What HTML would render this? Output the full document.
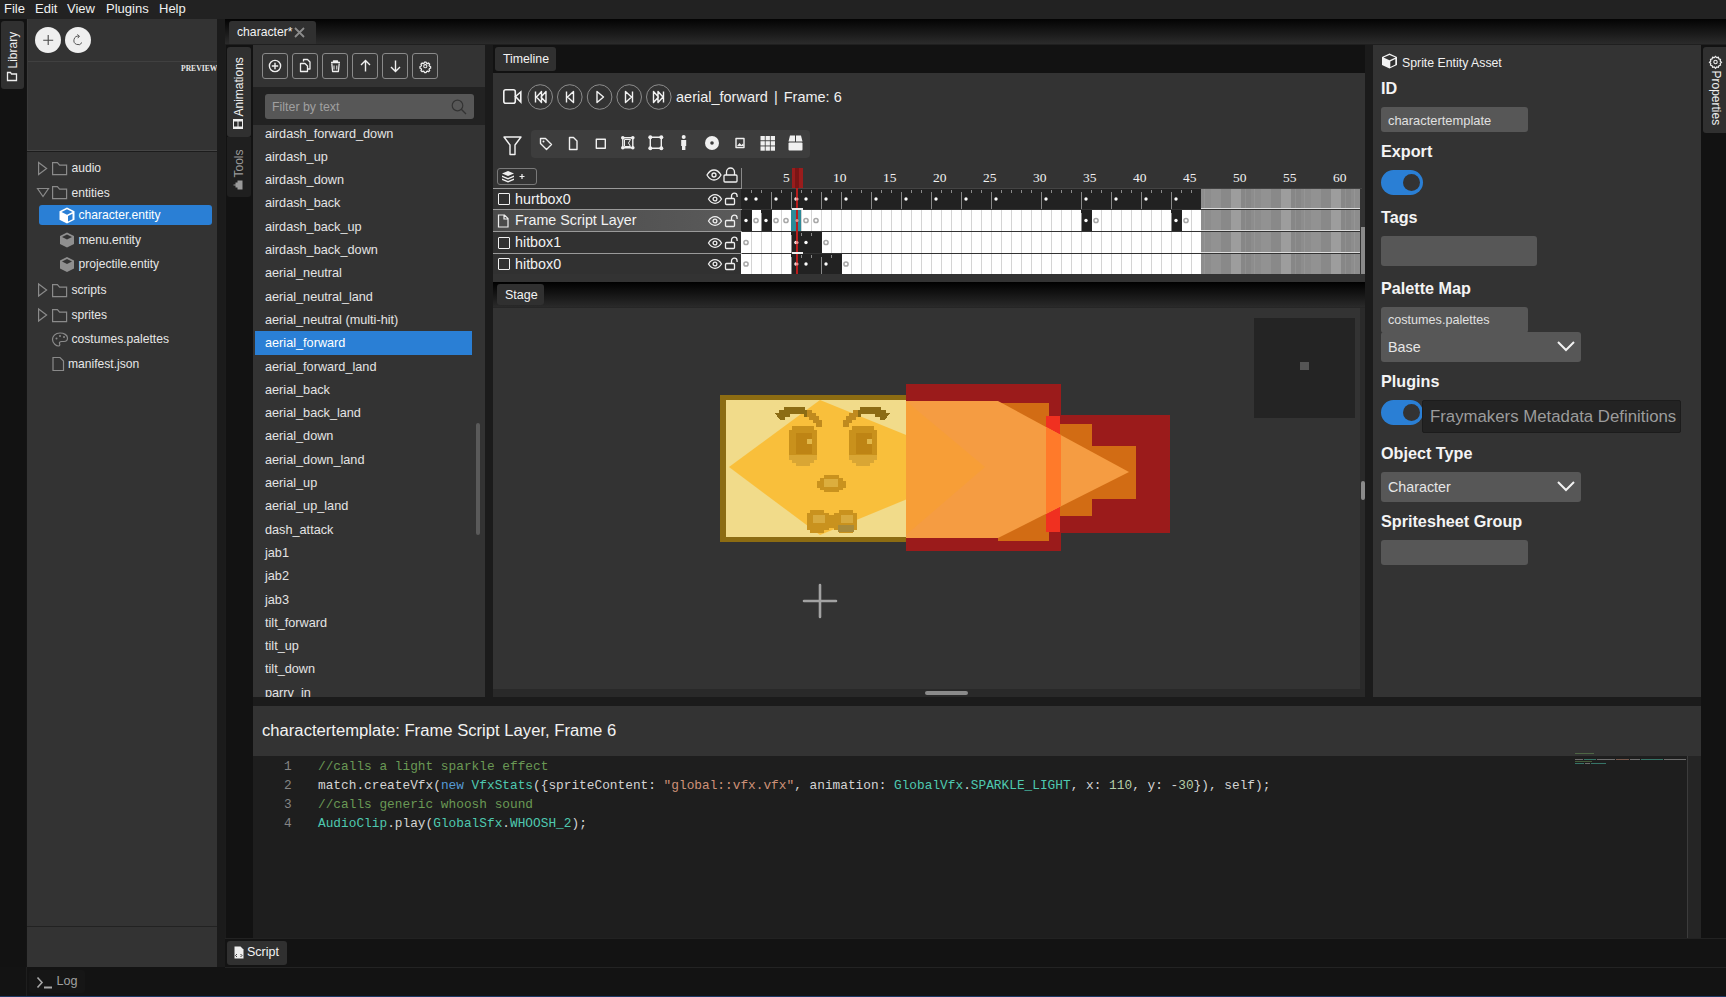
<!DOCTYPE html>
<html><head><meta charset="utf-8">
<style>
*{box-sizing:border-box;margin:0;padding:0}
html,body{width:1726px;height:997px;overflow:hidden;background:#141414;font-family:"Liberation Sans",sans-serif;color:#e8e8e8;position:relative}
.a{position:absolute}
.menu{left:0;top:0;width:1726px;height:19px;background:#222;font-size:13px;color:#f0f0f0}
.menu span{position:absolute;top:1px;line-height:15px}
.t{position:absolute;white-space:nowrap}
svg{overflow:visible}
</style></head><body>
<!-- menu -->
<div class="a menu"><span style="left:4px">File</span><span style="left:35px">Edit</span><span style="left:67px">View</span><span style="left:106px">Plugins</span><span style="left:159px">Help</span></div>

<!-- left strip -->
<div class="a" style="left:0;top:19px;width:26px;height:948px;background:#121212"></div>
<div class="a" style="left:1px;top:21px;width:23px;height:68px;background:#303030;border-radius:3px"></div>
<div class="a" style="left:2px;top:22px;width:22px;height:62px;">
 <div class="t" style="left:-20px;top:22px;width:62px;transform:rotate(-90deg);font-size:12px;color:#eee;line-height:15px">
  <svg width="12" height="11" viewBox="0 0 12 11" style="vertical-align:-1px;margin-right:2px"><path d="M1.5 1.5h3l1 1.5h5v6.5h-9z" fill="none" stroke="#eee" stroke-width="1.3" transform="rotate(90 6 5.5)"/></svg>Library</div>
</div>

<!-- library panel -->
<div class="a" style="left:27px;top:19px;width:190px;height:948px;background:#333"></div>
<div class="a" style="left:27px;top:19px;width:190px;height:42px;background:#333"></div>
<div class="a" style="left:35px;top:27px;width:26px;height:26px;border-radius:50%;background:#efefef"></div>
<div class="a" style="left:65px;top:27px;width:26px;height:26px;border-radius:50%;background:#efefef"></div>
<svg class="a" style="left:35px;top:27px" width="26" height="26"><path d="M13.2 8v10M8.2 13.2h10" stroke="#4a4a4a" stroke-width="1.1"/></svg>
<svg class="a" style="left:65px;top:27px" width="26" height="26"><path d="M17 15.5a4.3 4.3 0 1 1 -3 -6.3" fill="none" stroke="#555" stroke-width="1"/><path d="M12.3 7.5l2.2 1.7l-1.8 2" fill="none" stroke="#555" stroke-width="1"/></svg>
<div class="a" style="left:27px;top:61px;width:190px;height:1px;background:#404040"></div>
<div class="t" style="left:181px;top:63.5px;font-family:'Liberation Serif',serif;font-weight:bold;font-size:7.6px;color:#e8e8e8;letter-spacing:0px;line-height:9px">PREVIEW</div>
<div class="a" style="left:27px;top:150px;width:190px;height:1px;background:#454545"></div><div class="a" style="left:27px;top:151px;width:190px;height:1px;background:#1c1c1c"></div><div class="a" style="left:27px;top:19px;width:1px;height:131px;background:#3a3a3a"></div>
<!-- tree -->
<div class="a" style="left:28px;top:152px;width:188px;height:774px;background:#333;border-radius:3px"></div>
<div class="a" style="left:27px;top:926px;width:190px;height:1px;background:#222"></div>
<div class="a" style="left:39px;top:205px;width:173px;height:20px;background:#2a7fd5;border-radius:3px"></div>
<svg class="a" style="left:0;top:0" width="217" height="380">
 <g fill="none" stroke="#8a8a8a" stroke-width="1.2">
  <path d="M38.6 162.5v12l8 -6z"/>
  <path d="M52.6 162.6v12h14v-9.5h-7l-2.2-2.5z"/>
  <path d="M37.5 188.5h11l-5.5 8z"/>
  <path d="M52.6 186.6v12h14v-9.5h-7l-2.2-2.5z"/>
  <path d="M38.6 284v12l8 -6z"/>
  <path d="M52.6 284.6v12h14v-9.5h-7l-2.2-2.5z"/>
  <path d="M38.6 309v12l8 -6z"/>
  <path d="M52.6 309.6v12h14v-9.5h-7l-2.2-2.5z"/>
  <path d="M60 333c-5 0 -7.5 3.5 -7.5 6.5c0 4 4 6.5 6 6.5c1.5 0 1.5 -1.5 1 -2.5c-0.5 -1 0.5 -2 2 -2h2.5c2 0 3.5 -1.5 3.5 -3.5c0 -3 -3.5 -5 -7.5 -5z"/>
  <path d="M53 357.5h7l3.5 3.5v9.5h-10.5z"/>
 </g>
 <g fill="#8a8a8a"><circle cx="56.5" cy="338.5" r="1"/><circle cx="60" cy="336" r="1"/><circle cx="64" cy="337" r="1"/></g>
 <g fill="#8f8f8f">
  <path d="M67 232.5l7 3.5v8l-7 3.5l-7-3.5v-8z"/>
  <path d="M67 257l7 3.5v8l-7 3.5l-7-3.5v-8z"/>
 </g>
 <g fill="#333"><path d="M62 237l5 2.5l5-2.5l-5-2.5z"/><path d="M62 261.5l5 2.5l5-2.5l-5-2.5z"/></g>
 <g fill="#fff"><path d="M67 207.5l7.5 3.8v8.5l-7.5 3.8l-7.5-3.8v-8.5z"/></g>
 <g fill="#2a7fd5"><path d="M61.5 212l5.5 2.8l5.5-2.8l-5.5-2.8z"/><path d="M68 216v5.5l4.5 -2.3v-5.5z"/></g>
</svg>
<div class="t" style="left:71.5px;top:160.5px;font-size:12.1px;color:#e6e6e6;line-height:15px">audio</div>
<div class="t" style="left:71.5px;top:185.5px;font-size:12.1px;color:#e6e6e6;line-height:15px">entities</div>
<div class="t" style="left:78.5px;top:207.5px;font-size:12.1px;color:#fff;line-height:15px">character.entity</div>
<div class="t" style="left:78.5px;top:232.5px;font-size:12.1px;color:#e6e6e6;line-height:15px">menu.entity</div>
<div class="t" style="left:78.5px;top:257.0px;font-size:12.1px;color:#e6e6e6;line-height:15px">projectile.entity</div>
<div class="t" style="left:71.5px;top:282.5px;font-size:12.1px;color:#e6e6e6;line-height:15px">scripts</div>
<div class="t" style="left:71.5px;top:307.5px;font-size:12.1px;color:#e6e6e6;line-height:15px">sprites</div>
<div class="t" style="left:71.5px;top:331.5px;font-size:12.1px;color:#e6e6e6;line-height:15px">costumes.palettes</div>
<div class="t" style="left:68px;top:356.5px;font-size:12.1px;color:#e6e6e6;line-height:15px">manifest.json</div>

<!-- divider -->
<div class="a" style="left:217px;top:19px;width:8px;height:948px;background:#1b1b1b"></div>

<!-- log bar -->
<div class="a" style="left:0;top:967px;width:1726px;height:30px;background:#131313"></div>
<div class="a" style="left:29px;top:969.5px;width:56px;height:23px;background:#161616;border-radius:3px"></div><div class="a" style="left:26px;top:967px;width:1px;height:30px;background:#1e1e1e"></div>
<svg class="a" style="left:36px;top:976px" width="18" height="14"><path d="M1.5 1.5l4.5 5l-4.5 5" fill="none" stroke="#a8a8a8" stroke-width="1.6"/><rect x="8" y="10.5" width="8" height="2" fill="#a8a8a8"/></svg><div class="t" style="left:56.5px;top:974px;font-size:12.6px;color:#a0a0a0;line-height:15px">Log</div>
<div class="a" style="left:0;top:995.5px;width:1726px;height:1.5px;background:#1f3a66"></div>
<!-- doc tab strip -->
<div class="a" style="left:225px;top:19px;width:1501px;height:25px;background:linear-gradient(#030303,#2b2b2b)"></div>
<div class="a" style="left:229px;top:21px;width:87px;height:23px;background:#303030;border-radius:3px 3px 0 0"></div>
<div class="t" style="left:237px;top:25px;font-size:12.2px;color:#f2f2f2;line-height:15px">character*</div>
<svg class="a" style="left:294px;top:27px" width="11" height="11"><path d="M1 1L10 10M10 1L1 10" stroke="#8c8c8c" stroke-width="1.8"/></svg>
<div class="a" style="left:225px;top:44px;width:1501px;height:1px;background:#1f1f1f"></div>
<!-- vertical tabs strip -->
<div class="a" style="left:225px;top:45px;width:30px;height:922px;background:#1c1c1c"></div><div class="a" style="left:226px;top:45px;width:27px;height:894px;background:#121212"></div>
<div class="a" style="left:227px;top:47px;width:24px;height:90px;background:#303030;border-radius:3px"></div>
<div class="a" style="left:227px;top:137px;width:24px;height:60px;background:#1f1f1f;border-radius:0 0 3px 3px"></div>
<div class="t" style="left:201px;top:84px;width:76px;transform:rotate(-90deg);font-size:12px;color:#f0f0f0;line-height:15px;text-align:left">
<svg width="11" height="11" viewBox="0 0 11 11" style="vertical-align:-1px;margin-right:2px"><rect x="0.5" y="0.5" width="10" height="10" fill="#eee"/><rect x="3" y="1.5" width="5" height="3.5" fill="#2d2d2d"/><rect x="3" y="6" width="5" height="3.5" fill="#2d2d2d"/></svg>Animations</div>
<div class="t" style="left:215px;top:159px;width:48px;transform:rotate(-90deg);font-size:12px;color:#9a9a9a;line-height:15px;text-align:left">
<svg width="11" height="11" viewBox="0 0 11 11" style="vertical-align:-1px;margin-right:2px"><path d="M1 10V5h2V3h2V1h1v2h2v2h2v5z" fill="#999"/></svg>Tools</div>
<!-- animations panel -->
<div class="a" style="left:253px;top:45px;width:232px;height:652px;background:#333"></div>
<div class="a" style="left:253px;top:87px;width:232px;height:38px;background:#222"></div>
<div class="a" style="left:265px;top:94px;width:209px;height:25px;background:#575757;border-radius:3px"></div>
<div class="t" style="left:272px;top:100px;font-size:12.4px;color:#a0a0a0;line-height:15px">Filter by text</div>
<svg class="a" style="left:450px;top:98px" width="18" height="18"><circle cx="7.5" cy="7.5" r="5.3" fill="none" stroke="#333" stroke-width="1.2"/><path d="M11.3 11.3L16 16" stroke="#333" stroke-width="1.3"/></svg>
<div class="a" style="left:255px;top:125px;width:229px;height:572px;background:#333"></div>
<div class="a" style="left:255px;top:331px;width:217px;height:24px;background:#2a7fd5"></div>
<div class="a" style="left:476px;top:423px;width:4px;height:112px;background:#5a5a5a;border-radius:2px"></div>

<div class="a" style="left:262px;top:53px;width:26px;height:26px;border:1px solid #8a8a8a;border-radius:3px"></div>
<div class="a" style="left:292px;top:53px;width:26px;height:26px;border:1px solid #8a8a8a;border-radius:3px"></div>
<div class="a" style="left:322px;top:53px;width:26px;height:26px;border:1px solid #8a8a8a;border-radius:3px"></div>
<div class="a" style="left:352px;top:53px;width:26px;height:26px;border:1px solid #8a8a8a;border-radius:3px"></div>
<div class="a" style="left:382px;top:53px;width:26px;height:26px;border:1px solid #8a8a8a;border-radius:3px"></div>
<div class="a" style="left:412px;top:53px;width:26px;height:26px;border:1px solid #8a8a8a;border-radius:3px"></div>
<svg class="a" style="left:0;top:0" width="490" height="90">
 <g fill="none" stroke="#f0f0f0" stroke-width="1.4">
  <circle cx="275" cy="66" r="5.6"/><path d="M275 62.8v6.4M271.8 66h6.4"/>
  
  <path d="M365.5 60.5v11M361 65l4.5-4.5l4.5 4.5"/>
  <path d="M395.5 60.5v11M391 67l4.5 4.5l4.5-4.5"/>
 </g>
 <g fill="none" stroke="#f0f0f0" stroke-width="1.3" stroke-linejoin="round">
  <path d="M303.5 61.5v-2h4l2.5 2.5v7h-2"/>
  <path d="M300.5 63.5h4.5l2.5 2.5v5.5h-7z" fill="#333"/>
  <path d="M331 62.5h9M333.5 62.5v-1.5h4v1.5"/>
  <path d="M331.8 63.5l0.8 8h5.8l0.8-8"/>
  <path d="M334 65.5v4M336.8 65.5v4" stroke-width="1"/>
 </g>
 <g transform="translate(425.3 66.2) scale(0.72)"><path d="M-1.2 -5.8h2.4l0.4 1.6l1.3 0.6l1.5-0.9l1.7 1.7l-0.9 1.5l0.6 1.3l1.6 0.4v2.4l-1.6 0.4l-0.6 1.3l0.9 1.5l-1.7 1.7l-1.5-0.9l-1.3 0.6l-0.4 1.6h-2.4l-0.4-1.6l-1.3-0.6l-1.5 0.9l-1.7-1.7l0.9-1.5l-0.6-1.3l-1.6-0.4v-2.4l1.6-0.4l0.6-1.3l-0.9-1.5l1.7-1.7l1.5 0.9l1.3-0.6z" fill="none" stroke="#eee" stroke-width="1.7" stroke-linejoin="round"/><circle r="2.2" fill="none" stroke="#eee" stroke-width="1.5"/></g>
</svg>
<div class="t" style="left:265px;top:126.5px;font-size:12.7px;color:#e4e4e4;line-height:15px">airdash_forward_down</div>
<div class="t" style="left:265px;top:149.8px;font-size:12.7px;color:#e4e4e4;line-height:15px">airdash_up</div>
<div class="t" style="left:265px;top:173.1px;font-size:12.7px;color:#e4e4e4;line-height:15px">airdash_down</div>
<div class="t" style="left:265px;top:196.4px;font-size:12.7px;color:#e4e4e4;line-height:15px">airdash_back</div>
<div class="t" style="left:265px;top:219.7px;font-size:12.7px;color:#e4e4e4;line-height:15px">airdash_back_up</div>
<div class="t" style="left:265px;top:243.0px;font-size:12.7px;color:#e4e4e4;line-height:15px">airdash_back_down</div>
<div class="t" style="left:265px;top:266.3px;font-size:12.7px;color:#e4e4e4;line-height:15px">aerial_neutral</div>
<div class="t" style="left:265px;top:289.6px;font-size:12.7px;color:#e4e4e4;line-height:15px">aerial_neutral_land</div>
<div class="t" style="left:265px;top:312.9px;font-size:12.7px;color:#e4e4e4;line-height:15px">aerial_neutral (multi-hit)</div>
<div class="t" style="left:265px;top:336.2px;font-size:12.7px;color:#fff;line-height:15px">aerial_forward</div>
<div class="t" style="left:265px;top:359.5px;font-size:12.7px;color:#e4e4e4;line-height:15px">aerial_forward_land</div>
<div class="t" style="left:265px;top:382.8px;font-size:12.7px;color:#e4e4e4;line-height:15px">aerial_back</div>
<div class="t" style="left:265px;top:406.1px;font-size:12.7px;color:#e4e4e4;line-height:15px">aerial_back_land</div>
<div class="t" style="left:265px;top:429.4px;font-size:12.7px;color:#e4e4e4;line-height:15px">aerial_down</div>
<div class="t" style="left:265px;top:452.7px;font-size:12.7px;color:#e4e4e4;line-height:15px">aerial_down_land</div>
<div class="t" style="left:265px;top:476.0px;font-size:12.7px;color:#e4e4e4;line-height:15px">aerial_up</div>
<div class="t" style="left:265px;top:499.3px;font-size:12.7px;color:#e4e4e4;line-height:15px">aerial_up_land</div>
<div class="t" style="left:265px;top:522.6px;font-size:12.7px;color:#e4e4e4;line-height:15px">dash_attack</div>
<div class="t" style="left:265px;top:545.9px;font-size:12.7px;color:#e4e4e4;line-height:15px">jab1</div>
<div class="t" style="left:265px;top:569.2px;font-size:12.7px;color:#e4e4e4;line-height:15px">jab2</div>
<div class="t" style="left:265px;top:592.5px;font-size:12.7px;color:#e4e4e4;line-height:15px">jab3</div>
<div class="t" style="left:265px;top:615.8px;font-size:12.7px;color:#e4e4e4;line-height:15px">tilt_forward</div>
<div class="t" style="left:265px;top:639.1px;font-size:12.7px;color:#e4e4e4;line-height:15px">tilt_up</div>
<div class="t" style="left:265px;top:662.4px;font-size:12.7px;color:#e4e4e4;line-height:15px">tilt_down</div>
<div class="t" style="left:265px;top:685.7px;font-size:12.7px;color:#e4e4e4;line-height:15px">parry_in</div>
<div class="a" style="left:253px;top:697px;width:240px;height:9px;background:#1b1b1b"></div><!-- properties -->
<div class="a" style="left:1373px;top:45px;width:328px;height:652px;background:#333"></div>
<div class="a" style="left:1701px;top:45px;width:25px;height:894px;background:#121212"></div>
<div class="a" style="left:1703px;top:47px;width:23px;height:86px;background:#303030;border-radius:3px 0 0 3px"></div>
<div class="t" style="left:1675px;top:88px;width:80px;transform:rotate(90deg);font-size:12px;color:#f0f0f0;line-height:15px">
<svg width="12" height="12" viewBox="0 0 12 12" style="vertical-align:-2px;margin-right:3px;transform:rotate(-90deg)"><path d="M6 0.8l1.2 1.3l1.7-0.3l0.5 1.6l1.6 0.5l-0.3 1.7l1.3 1.2l-1.3 1.2l0.3 1.7l-1.6 0.5l-0.5 1.6l-1.7-0.3l-1.2 1.3l-1.2-1.3l-1.7 0.3l-0.5-1.6l-1.6-0.5l0.3-1.7l-1.3-1.2l1.3-1.2l-0.3-1.7l1.6-0.5l0.5-1.6l1.7 0.3z" fill="none" stroke="#eee" stroke-width="1.2"/><circle cx="6" cy="6.5" r="1.7" fill="none" stroke="#eee" stroke-width="1.1"/></svg>Properties</div>
<svg class="a" style="left:1381px;top:53px" width="17" height="16"><path d="M8.5 0.5l7.5 3.5v8l-7.5 3.5l-7.5-3.5v-8z" fill="#f2f2f2"/><path d="M2.5 4.5l6 2.8l6-2.8l-6-2.6z" fill="#333"/><path d="M9.3 8.5v5.5l5-2.5v-5.5z" fill="#2e2e2e"/></svg>
<div class="t" style="left:1402px;top:56px;font-size:12.3px;color:#f0f0f0;line-height:15px">Sprite Entity Asset</div>

<div class="t" style="left:1381px;top:79px;font-size:16.2px;font-weight:bold;color:#f4f4f4;line-height:19px">ID</div>
<div class="a" style="left:1381px;top:107px;width:147px;height:25px;background:#575757;border-radius:3px"></div>
<div class="t" style="left:1388px;top:113px;font-size:12.9px;color:#e0e0e0;line-height:15px">charactertemplate</div>
<div class="t" style="left:1381px;top:142px;font-size:16.2px;font-weight:bold;color:#f4f4f4;line-height:19px">Export</div>
<div class="a" style="left:1381px;top:170px;width:42px;height:25px;background:#2a7fd5;border-radius:13px"></div>
<div class="a" style="left:1403px;top:174px;width:17px;height:17px;background:#333;border-radius:50%"></div>
<div class="t" style="left:1381px;top:208px;font-size:16.2px;font-weight:bold;color:#f4f4f4;line-height:19px">Tags</div>
<div class="a" style="left:1381px;top:236px;width:156px;height:30px;background:#575757;border-radius:3px"></div>
<div class="t" style="left:1381px;top:279px;font-size:16.2px;font-weight:bold;color:#f4f4f4;line-height:19px">Palette Map</div>
<div class="a" style="left:1381px;top:307px;width:147px;height:26px;background:#575757;border-radius:3px"></div>
<div class="t" style="left:1388px;top:312.5px;font-size:12.6px;color:#e0e0e0;line-height:15px">costumes.palettes</div>
<div class="a" style="left:1381px;top:332px;width:200px;height:30px;background:#575757;border-radius:3px"></div>
<div class="t" style="left:1388px;top:339.5px;font-size:14.3px;color:#e6e6e6;line-height:15px">Base</div>
<svg class="a" style="left:1556px;top:340px" width="20" height="12"><path d="M2 2l8 8l8-8" fill="none" stroke="#f2f2f2" stroke-width="2"/></svg>
<div class="t" style="left:1381px;top:372px;font-size:16.2px;font-weight:bold;color:#f4f4f4;line-height:19px">Plugins</div>
<div class="a" style="left:1381px;top:400px;width:42px;height:25px;background:#2a7fd5;border-radius:13px"></div>
<div class="a" style="left:1403px;top:404px;width:17px;height:17px;background:#333;border-radius:50%"></div>
<div class="a" style="left:1422px;top:400px;width:259px;height:33px;background:#232323;border:1px solid #1c1c1c;border-radius:2px"></div>
<div class="t" style="left:1430px;top:407px;font-size:16.8px;color:#9c9c9c;line-height:19px">Fraymakers Metadata Definitions</div>
<div class="t" style="left:1381px;top:444px;font-size:16.2px;font-weight:bold;color:#f4f4f4;line-height:19px">Object Type</div>
<div class="a" style="left:1381px;top:472px;width:200px;height:30px;background:#575757;border-radius:3px"></div>
<div class="t" style="left:1388px;top:479.5px;font-size:14.3px;color:#e6e6e6;line-height:15px">Character</div>
<svg class="a" style="left:1556px;top:480px" width="20" height="12"><path d="M2 2l8 8l8-8" fill="none" stroke="#f2f2f2" stroke-width="2"/></svg>
<div class="t" style="left:1381px;top:512px;font-size:16.2px;font-weight:bold;color:#f4f4f4;line-height:19px">Spritesheet Group</div>
<div class="a" style="left:1381px;top:540px;width:147px;height:25px;background:#575757;border-radius:3px"></div>
<div class="a" style="left:1373px;top:697px;width:328px;height:9px;background:#1b1b1b"></div><!-- script -->
<div class="a" style="left:493px;top:697px;width:880px;height:9px;background:#1b1b1b"></div>
<div class="a" style="left:253px;top:706px;width:1448px;height:50px;background:#333"></div>
<div class="t" style="left:262px;top:721px;font-size:16.65px;color:#f2f2f2;line-height:19px">charactertemplate: Frame Script Layer, Frame 6</div>
<div class="a" style="left:253px;top:756px;width:1448px;height:183px;background:#1e1e1e"></div>
<div class="a" style="left:1687px;top:756px;width:1px;height:182px;background:#3c3c3c"></div>
<div class="a" style="left:1688px;top:756px;width:13px;height:183px;background:#252525"></div>
<div class="a" style="left:225px;top:939px;width:1501px;height:28px;background:#131313"></div><div class="a" style="left:225px;top:938px;width:1501px;height:1px;background:#222"></div><div class="a" style="left:225px;top:967px;width:1501px;height:1px;background:#232323"></div>
<div class="a" style="left:227px;top:941px;width:60px;height:24px;background:#303030;border-radius:3px"></div>
<svg class="a" style="left:234px;top:946px" width="10" height="13"><path d="M0.5 0.5h6l3 3v9h-9z" fill="#eee"/><path d="M3 8l-1.5 1.5l1.5 1.5M6.5 8l1.5 1.5l-1.5 1.5" fill="none" stroke="#2b2b2b" stroke-width="0.9"/></svg>
<div class="t" style="left:247px;top:945px;font-size:12.5px;color:#f4f4f4;line-height:15px">Script</div>

<div class="t" style="left:284px;top:757px;font-family:'Liberation Mono',monospace;font-size:12.8px;line-height:19px;color:#858585">1</div>
<div class="t" style="left:318px;top:757px;font-family:'Liberation Mono',monospace;font-size:12.8px;line-height:19px;color:#d4d4d4"><span style="color:#6a9955">//calls a light sparkle effect</span></div>
<div class="t" style="left:284px;top:776px;font-family:'Liberation Mono',monospace;font-size:12.8px;line-height:19px;color:#858585">2</div>
<div class="t" style="left:318px;top:776px;font-family:'Liberation Mono',monospace;font-size:12.8px;line-height:19px;color:#d4d4d4">match.createVfx(<span style="color:#569cd6">new</span> <span style="color:#4ec9b0">VfxStats</span>({spriteContent: <span style="color:#ce9178">"global::vfx.vfx"</span>, animation: <span style="color:#4ec9b0">GlobalVfx</span>.<span style="color:#4fc1ff;color:#4ec9b0">SPARKLE_LIGHT</span>, x: <span style="color:#b5cea8">110</span>, y: -<span style="color:#b5cea8">30</span>}), self);</div>
<div class="t" style="left:284px;top:795px;font-family:'Liberation Mono',monospace;font-size:12.8px;line-height:19px;color:#858585">3</div>
<div class="t" style="left:318px;top:795px;font-family:'Liberation Mono',monospace;font-size:12.8px;line-height:19px;color:#d4d4d4"><span style="color:#6a9955">//calls generic whoosh sound</span></div>
<div class="t" style="left:284px;top:814px;font-family:'Liberation Mono',monospace;font-size:12.8px;line-height:19px;color:#858585">4</div>
<div class="t" style="left:318px;top:814px;font-family:'Liberation Mono',monospace;font-size:12.8px;line-height:19px;color:#d4d4d4"><span style="color:#4ec9b0">AudioClip</span>.play(<span style="color:#4ec9b0">GlobalSfx</span>.<span style="color:#4ec9b0">WHOOSH_2</span>);</div>
<svg class="a" style="left:1575px;top:752px;opacity:0.5" width="115" height="14"><rect x="0" y="1" width="19" height="1" fill="#6a9955"/><rect x="0" y="7" width="8" height="1" fill="#bbb"/><rect x="9" y="7" width="12" height="1" fill="#4ec9b0"/><rect x="22" y="7" width="18" height="1" fill="#bbb"/><rect x="41" y="7" width="13" height="1" fill="#ce9178"/><rect x="55" y="7" width="10" height="1" fill="#bbb"/><rect x="66" y="7" width="22" height="1" fill="#4ec9b0"/><rect x="89" y="7" width="22" height="1" fill="#bbb"/><rect x="0" y="9" width="17" height="1" fill="#6a9955"/><rect x="0" y="11" width="9" height="1" fill="#4ec9b0"/><rect x="10" y="11" width="5" height="1" fill="#bbb"/><rect x="16" y="11" width="15" height="1" fill="#4ec9b0"/></svg><!-- stage -->
<div class="a" style="left:493px;top:274px;width:872px;height:8px;background:#1f1f1f"></div>
<div class="a" style="left:493px;top:282px;width:872px;height:25px;background:linear-gradient(#000,#2a2a2a)"></div>
<div class="a" style="left:497px;top:284px;width:47px;height:21px;background:#303030;border-radius:3px"></div>
<div class="t" style="left:505px;top:287.5px;font-size:12.5px;color:#f4f4f4;line-height:15px">Stage</div>
<div class="a" style="left:493px;top:307px;width:872px;height:1px;background:#262626"></div>
<div class="a" style="left:493px;top:308px;width:867px;height:381px;background:#333"></div>
<div class="a" style="left:1360px;top:308px;width:5px;height:381px;background:#2a2a2a"></div>
<div class="a" style="left:1360.5px;top:481px;width:4px;height:19px;background:#8a8a8a;border-radius:2px"></div>
<div class="a" style="left:493px;top:689px;width:872px;height:8px;background:#292929"></div>
<div class="a" style="left:925px;top:690.5px;width:43px;height:4px;background:#8a8a8a;border-radius:2px"></div>
<div class="a" style="left:1254px;top:318px;width:101px;height:100px;background:#242424"></div>
<div class="a" style="left:1300px;top:362px;width:9px;height:8px;background:#555"></div>
<svg class="a" style="left:0;top:0" width="1373" height="700">
 <path d="M820 585v32M804 601h32" stroke="#a2a2a2" stroke-width="2.6" stroke-linecap="round"/>
 <rect x="720" y="395" width="280" height="147" fill="#8c6c12"/>
 <rect x="726" y="400" width="272" height="137" fill="#f1db8a"/>
 <polygon points="729,467 820,400 985,467 820,535" fill="#ffaa00" fill-opacity="0.57"/>
 <g shape-rendering="crispEdges">
  <path d="M775 413h4v-3h5v-3h21v3h7v3h4v3h3v4h3v7h-6v-4h-3v-3h-4v-3h-5v-3h-14v3h-5v3h-5z" fill="#8c6c14"/>
  <path d="M807 410h5v3h4v3h3v4h3v7h-6v-4h-3v-3h-4v-3h-2z" fill="#c08a1e"/>
  <path d="M890 413h-4v-3h-5v-3h-21v3h-7v3h-4v3h-3v4h-3v7h6v-4h3v-3h4v-3h5v-3h14v3h5v3h5z" fill="#8c6c14"/>
  <path d="M858 410h-5v3h-4v3h-3v4h-3v7h6v-4h3v-3h4v-3h2z" fill="#c08a1e"/>
  <path d="M792 426h22v4h3v30h-3v3h-4v3h-14v-3h-4v-3h-3v-30h3z" fill="#c9911c"/>
  <path d="M789 455h28v5h-3v3h-4v3h-14v-3h-4v-3h-3z" fill="#d9a634"/>
  
  <rect x="796" y="433" width="16" height="21" fill="#be8414"/>
  <rect x="807" y="439" width="5" height="5" fill="#e2b84a"/>
  <path d="M852 426h22v4h3v30h-3v3h-4v3h-14v-3h-4v-3h-3v-30h3z" fill="#c9911c"/>
  <path d="M849 455h28v5h-3v3h-4v3h-14v-3h-4v-3h-3z" fill="#d9a634"/>
  
  <rect x="856" y="433" width="16" height="21" fill="#be8414"/>
  <rect x="867" y="439" width="5" height="5" fill="#e2b84a"/>
  <path d="M824 475h15v3h4v3h3v7h-3v2h-4v2h-15v-2h-4v-2h-3v-7h3v-3h4z" fill="#c9921e"/>
  <rect x="824" y="479" width="14" height="8" fill="#dcae3e"/>
  <path d="M810 510h14v3h5v2h5v-2h5v-3h14v3h4v17h-4v3h-14v-3h-5v-2h-5v2h-5v3h-14v-3h-3v-17h3z" fill="#c9921e"/>
  <rect x="813" y="515" width="12" height="8" fill="#d8aa3e"/>
  <rect x="841" y="515" width="12" height="8" fill="#d8aa3e"/>
  <rect x="838" y="525" width="16" height="7" fill="#a88a3a"/>
 </g>
 <rect x="906" y="384" width="155" height="167" fill="#9b1b1b"/>
 <rect x="1061" y="415" width="109" height="118" fill="#9b1b1b"/>
 <polygon points="998,403 1049,403 1049,424 1092,424 1092,446 1136,446 1136,499 1092,499 1092,516 1049,516 1049,541 998,541" fill="#d26c14"/>
 <rect x="1046" y="416" width="14" height="116" fill="#f03020"/>
 <polygon points="906,401 998,401 1129,472 998,538 906,538" fill="#f59c42"/>
 <polygon points="906,401 985,467 906,535" fill="#f8a030" fill-opacity="0.6"/>
 <polygon points="1046,427 1061,435 1061,506 1046,514" fill="#ff7a2a"/>
</svg>
<!-- timeline panel -->
<div class="a" style="left:485px;top:45px;width:8px;height:660px;background:#1b1b1b"></div>
<div class="a" style="left:493px;top:45px;width:880px;height:28px;background:#121212"></div>
<div class="a" style="left:495px;top:47px;width:61px;height:24px;background:#303030;border-radius:3px"></div>
<div class="t" style="left:503px;top:52px;font-size:12.3px;color:#f4f4f4;line-height:15px">Timeline</div>
<div class="a" style="left:493px;top:73px;width:872px;height:209px;background:#333"></div>
<div class="a" style="left:1365px;top:45px;width:8px;height:660px;background:#1b1b1b"></div>
<svg class="a" style="left:0;top:0" width="1373" height="290">
 <g fill="none" stroke="#f2f2f2" stroke-width="1.6">
  <rect x="503.8" y="89.8" width="11.5" height="13.5" rx="2"/>
  <path d="M515.5 96.5l5.3-4.5v10z"/>
 </g>
 <g fill="none" stroke="#8c8c8c" stroke-width="1">
  <circle cx="540.2" cy="97" r="12.3"/><circle cx="569.8" cy="97" r="12.3"/><circle cx="599.6" cy="97" r="12.3"/><circle cx="629.2" cy="97" r="12.3"/><circle cx="658.8" cy="97" r="12.3"/>
 </g>
 <g fill="none" stroke="#f2f2f2" stroke-width="1.4" stroke-linejoin="round">
  <path d="M535.5 91.5v11M541.5 91.5l-5 5.5l5 5.5zM546 91.5l-5 5.5l5 5.5z"/>
  <path d="M566.5 91.5v11M573.5 91.5l-6 5.5l6 5.5z"/>
  <path d="M597 91.5v11l6.5-5.5z"/>
  <path d="M632.5 91.5v11M625.5 91.5l6 5.5l-6 5.5z"/>
  <path d="M663.5 91.5v11M653.5 91.5l5 5.5l-5 5.5zM658 91.5l5 5.5l-5 5.5z"/>
  <path d="M504 137h17l-6 8v9.5h-5v-9.5z"/>
 </g>
</svg>
<div class="t" style="left:676px;top:89px;font-size:14.5px;color:#f0f0f0;line-height:16px">aerial_forward <span style="padding:0 2px">|</span> Frame: 6</div>
<div class="a" style="left:531px;top:130px;width:279px;height:28px;background:#3d3d3d;border-radius:4px"></div>
<svg class="a" style="left:0;top:0" width="1373" height="290">
 <g fill="none" stroke="#f0f0f0" stroke-width="1.4" stroke-linejoin="round">
  <path d="M540.5 138.5h5l6 6l-5 5l-6-6z"/>
  <path d="M569.5 137.5h4l3.5 3.5v8.5h-7.5z"/>
  <rect x="596.3" y="139.3" width="9" height="9"/>
  <rect x="622.8" y="137.8" width="10" height="10"/>
  <rect x="650.3" y="137.3" width="11" height="11"/>
  <path d="M736 138.5h8v9h-8z"/>
 </g>
 <g fill="#f0f0f0">
  <circle cx="622.8" cy="137.8" r="1.8"/><circle cx="632.8" cy="137.8" r="1.8"/><circle cx="622.8" cy="147.8" r="1.8"/><circle cx="632.8" cy="147.8" r="1.8"/>
  <circle cx="650.3" cy="137.3" r="2"/><circle cx="661.3" cy="137.3" r="2"/><circle cx="650.3" cy="148.3" r="2"/><circle cx="661.3" cy="148.3" r="2"/>
  <circle cx="543.5" cy="141.5" r="1"/>
  <circle cx="683.7" cy="137" r="2"/><path d="M681.2 140h5v6h-0.8v4h-3.4v-4h-0.8z"/>
  <circle cx="712" cy="143" r="7"/>
  <rect x="760.5" y="136" width="4.3" height="4.3"/><rect x="765.6" y="136" width="4.3" height="4.3"/><rect x="770.7" y="136" width="4.3" height="4.3"/>
  <rect x="760.5" y="141.2" width="4.3" height="4.3"/><rect x="765.6" y="141.2" width="4.3" height="4.3"/><rect x="770.7" y="141.2" width="4.3" height="4.3"/>
  <rect x="760.5" y="146.4" width="4.3" height="4.3"/><rect x="765.6" y="146.4" width="4.3" height="4.3"/><rect x="770.7" y="146.4" width="4.3" height="4.3"/>
  <path d="M788.5 141.5l1.5-6h5v6zM796 141.5v-6h5l1.5 6z"/><rect x="788.5" y="142.5" width="14" height="8" rx="1"/>
 </g>
 <circle cx="712" cy="143" r="1.8" fill="#3d3d3d"/>
 <path d="M737 146l2.5-3l2 2l1.5-1.5l1 2.5z" fill="#f0f0f0"/>
 <path d="M624.5 139.5l6 0l-2 3.5l2 3.5h-6z" fill="none" stroke="#f0f0f0" stroke-width="1"/>
</svg>
<!-- layers header -->
<div class="a" style="left:497px;top:168px;width:40px;height:17px;border:1px solid #7a7a7a;border-radius:3px"></div>
<svg class="a" style="left:0;top:0" width="1373" height="290">
 <g fill="#f0f0f0"><path d="M508 171l6 2.5l-6 2.5l-6-2.5z"/><path d="M502 175.5l6 2.5l6-2.5v1.5l-6 2.5l-6-2.5z"/><path d="M502 178.5l6 2.5l6-2.5v1.5l-6 2.5l-6-2.5z"/></g>
 <path d="M519.5 176.5h5M522 174v5" stroke="#f0f0f0" stroke-width="1.2"/>
 <g fill="none" stroke="#f0f0f0" stroke-width="1.3">
  <path d="M707 175c2-3.5 4.5-5 7-5s5 1.5 7 5c-2 3.5-4.5 5-7 5s-5-1.5-7-5z"/><circle cx="714" cy="175" r="2"/>
  <rect x="724" y="175" width="13" height="7" rx="1"/><path d="M726.5 175v-3a4 4 0 0 1 8 0v3"/>
 </g>
</svg>
<div class="a" style="left:741px;top:168px;width:1px;height:106px;background:#8a8a8a"></div>

<div class="a" style="left:493px;top:188px;width:249px;height:1px;background:#9a9a9a"></div>
<div class="a" style="left:493px;top:189px;width:248px;height:20px;background:#313131"></div>
<div class="a" style="left:493px;top:209px;width:249px;height:1px;background:#9a9a9a"></div>
<div class="a" style="left:497.5px;top:193.0px;width:12px;height:12px;border:1.5px solid #f0f0f0;border-radius:1px"></div>
<div class="t" style="left:515px;top:190.5px;font-size:14.3px;color:#f2f2f2;line-height:17px">hurtbox0</div>
<svg class="a" style="left:705px;top:192.0px" width="36" height="14"><g fill="none" stroke="#eee" stroke-width="1.3"><path d="M3.5 7c1.8-3 4-4.3 6.5-4.3s4.7 1.3 6.5 4.3c-1.8 3-4 4.3-6.5 4.3s-4.7-1.3-6.5-4.3z"/><circle cx="10" cy="7" r="1.9"/><rect x="20.5" y="6.5" width="9" height="6" rx="1"/><path d="M26.5 6.5v-2.5a2.8 2.8 0 0 1 5.6 0v1"/></g></svg>
<div class="a" style="left:493px;top:210px;width:248px;height:21px;background:linear-gradient(90deg,#4a4a4a,#5a5a5a)"></div>
<div class="a" style="left:493px;top:231px;width:249px;height:1px;background:#9a9a9a"></div>
<svg class="a" style="left:497px;top:213.5px" width="12" height="14"><path d="M1.5 1h6l3.5 3.5v8.5h-9.5z M7 1v4h4" fill="none" stroke="#eee" stroke-width="1.2"/></svg>
<div class="t" style="left:515px;top:212.0px;font-size:14.3px;color:#f2f2f2;line-height:17px">Frame Script Layer</div>
<svg class="a" style="left:705px;top:213.5px" width="36" height="14"><g fill="none" stroke="#eee" stroke-width="1.3"><path d="M3.5 7c1.8-3 4-4.3 6.5-4.3s4.7 1.3 6.5 4.3c-1.8 3-4 4.3-6.5 4.3s-4.7-1.3-6.5-4.3z"/><circle cx="10" cy="7" r="1.9"/><rect x="20.5" y="6.5" width="9" height="6" rx="1"/><path d="M26.5 6.5v-2.5a2.8 2.8 0 0 1 5.6 0v1"/></g></svg>
<div class="a" style="left:493px;top:232px;width:248px;height:21px;background:#313131"></div>
<div class="a" style="left:493px;top:253px;width:249px;height:1px;background:#9a9a9a"></div>
<div class="a" style="left:497.5px;top:236.5px;width:12px;height:12px;border:1.5px solid #f0f0f0;border-radius:1px"></div>
<div class="t" style="left:515px;top:234.0px;font-size:14.3px;color:#f2f2f2;line-height:17px">hitbox1</div>
<svg class="a" style="left:705px;top:235.5px" width="36" height="14"><g fill="none" stroke="#eee" stroke-width="1.3"><path d="M3.5 7c1.8-3 4-4.3 6.5-4.3s4.7 1.3 6.5 4.3c-1.8 3-4 4.3-6.5 4.3s-4.7-1.3-6.5-4.3z"/><circle cx="10" cy="7" r="1.9"/><rect x="20.5" y="6.5" width="9" height="6" rx="1"/><path d="M26.5 6.5v-2.5a2.8 2.8 0 0 1 5.6 0v1"/></g></svg>
<div class="a" style="left:493px;top:254px;width:248px;height:20px;background:#313131"></div>
<div class="a" style="left:497.5px;top:258.0px;width:12px;height:12px;border:1.5px solid #f0f0f0;border-radius:1px"></div>
<div class="t" style="left:515px;top:255.5px;font-size:14.3px;color:#f2f2f2;line-height:17px">hitbox0</div>
<svg class="a" style="left:705px;top:257.0px" width="36" height="14"><g fill="none" stroke="#eee" stroke-width="1.3"><path d="M3.5 7c1.8-3 4-4.3 6.5-4.3s4.7 1.3 6.5 4.3c-1.8 3-4 4.3-6.5 4.3s-4.7-1.3-6.5-4.3z"/><circle cx="10" cy="7" r="1.9"/><rect x="20.5" y="6.5" width="9" height="6" rx="1"/><path d="M26.5 6.5v-2.5a2.8 2.8 0 0 1 5.6 0v1"/></g></svg>
<div class="t" style="left:783.0px;top:170px;font-family:'Liberation Serif',serif;font-size:13.5px;color:#f2f2f2;line-height:15px">5</div>
<div class="t" style="left:833.0px;top:170px;font-family:'Liberation Serif',serif;font-size:13.5px;color:#f2f2f2;line-height:15px">10</div>
<div class="t" style="left:883.0px;top:170px;font-family:'Liberation Serif',serif;font-size:13.5px;color:#f2f2f2;line-height:15px">15</div>
<div class="t" style="left:933.0px;top:170px;font-family:'Liberation Serif',serif;font-size:13.5px;color:#f2f2f2;line-height:15px">20</div>
<div class="t" style="left:983.0px;top:170px;font-family:'Liberation Serif',serif;font-size:13.5px;color:#f2f2f2;line-height:15px">25</div>
<div class="t" style="left:1033.0px;top:170px;font-family:'Liberation Serif',serif;font-size:13.5px;color:#f2f2f2;line-height:15px">30</div>
<div class="t" style="left:1083.0px;top:170px;font-family:'Liberation Serif',serif;font-size:13.5px;color:#f2f2f2;line-height:15px">35</div>
<div class="t" style="left:1133.0px;top:170px;font-family:'Liberation Serif',serif;font-size:13.5px;color:#f2f2f2;line-height:15px">40</div>
<div class="t" style="left:1183.0px;top:170px;font-family:'Liberation Serif',serif;font-size:13.5px;color:#f2f2f2;line-height:15px">45</div>
<div class="t" style="left:1233.0px;top:170px;font-family:'Liberation Serif',serif;font-size:13.5px;color:#f2f2f2;line-height:15px">50</div>
<div class="t" style="left:1283.0px;top:170px;font-family:'Liberation Serif',serif;font-size:13.5px;color:#f2f2f2;line-height:15px">55</div>
<div class="t" style="left:1333.0px;top:170px;font-family:'Liberation Serif',serif;font-size:13.5px;color:#f2f2f2;line-height:15px">60</div>
<div class="a" style="left:792px;top:168px;width:11px;height:20px;background:#9a1c1c"></div>
<div class="a" style="left:795px;top:168px;width:4px;height:20px;background:#7a1515"></div>
<svg class="a" style="left:0;top:0" width="1373" height="290" shape-rendering="crispEdges">
<defs><pattern id="stripes" x="1201" y="0" width="50" height="10" patternUnits="userSpaceOnUse"><rect width="50" height="10" fill="#8c8c8c"/><rect x="0" width="10" height="10" fill="#8d8d8d"/><rect x="3" width="1" height="10" fill="#959595"/><rect x="10" width="10" height="10" fill="#929292"/><rect x="20" width="10" height="10" fill="#898989"/><rect x="30" width="10" height="10" fill="#9d9d9d"/><rect x="40" width="10" height="10" fill="#878787"/><rect x="44" width="1" height="10" fill="#909090"/></pattern></defs>
<rect x="741" y="189" width="460.0" height="20" fill="#fff"/>
<rect x="740.5" y="189" width="11.0" height="20" fill="#222"/>
<rect x="750.5" y="189" width="11.0" height="20" fill="#222"/>
<rect x="760.5" y="189" width="11.0" height="20" fill="#222"/>
<rect x="770.5" y="189" width="11.0" height="20" fill="#222"/>
<rect x="780.5" y="189" width="11.0" height="20" fill="#222"/>
<rect x="790.5" y="189" width="11.0" height="20" fill="#222"/>
<rect x="800.5" y="189" width="11.0" height="20" fill="#222"/>
<rect x="810.5" y="189" width="11.0" height="20" fill="#222"/>
<rect x="820.5" y="189" width="11.0" height="20" fill="#222"/>
<rect x="830.5" y="189" width="11.0" height="20" fill="#222"/>
<rect x="840.5" y="189" width="11.0" height="20" fill="#222"/>
<rect x="850.5" y="189" width="11.0" height="20" fill="#222"/>
<rect x="860.5" y="189" width="11.0" height="20" fill="#222"/>
<rect x="870.5" y="189" width="11.0" height="20" fill="#222"/>
<rect x="880.5" y="189" width="11.0" height="20" fill="#222"/>
<rect x="890.5" y="189" width="11.0" height="20" fill="#222"/>
<rect x="900.5" y="189" width="11.0" height="20" fill="#222"/>
<rect x="910.5" y="189" width="11.0" height="20" fill="#222"/>
<rect x="920.5" y="189" width="11.0" height="20" fill="#222"/>
<rect x="930.5" y="189" width="11.0" height="20" fill="#222"/>
<rect x="940.5" y="189" width="11.0" height="20" fill="#222"/>
<rect x="950.5" y="189" width="11.0" height="20" fill="#222"/>
<rect x="960.5" y="189" width="11.0" height="20" fill="#222"/>
<rect x="970.5" y="189" width="11.0" height="20" fill="#222"/>
<rect x="980.5" y="189" width="11.0" height="20" fill="#222"/>
<rect x="990.5" y="189" width="11.0" height="20" fill="#222"/>
<rect x="1000.5" y="189" width="11.0" height="20" fill="#222"/>
<rect x="1010.5" y="189" width="11.0" height="20" fill="#222"/>
<rect x="1020.5" y="189" width="11.0" height="20" fill="#222"/>
<rect x="1030.5" y="189" width="11.0" height="20" fill="#222"/>
<rect x="1040.5" y="189" width="11.0" height="20" fill="#222"/>
<rect x="1050.5" y="189" width="11.0" height="20" fill="#222"/>
<rect x="1060.5" y="189" width="11.0" height="20" fill="#222"/>
<rect x="1070.5" y="189" width="11.0" height="20" fill="#222"/>
<rect x="1080.5" y="189" width="11.0" height="20" fill="#222"/>
<rect x="1090.5" y="189" width="11.0" height="20" fill="#222"/>
<rect x="1100.5" y="189" width="11.0" height="20" fill="#222"/>
<rect x="1110.5" y="189" width="11.0" height="20" fill="#222"/>
<rect x="1120.5" y="189" width="11.0" height="20" fill="#222"/>
<rect x="1130.5" y="189" width="11.0" height="20" fill="#222"/>
<rect x="1140.5" y="189" width="11.0" height="20" fill="#222"/>
<rect x="1150.5" y="189" width="11.0" height="20" fill="#222"/>
<rect x="1160.5" y="189" width="11.0" height="20" fill="#222"/>
<rect x="1170.5" y="189" width="11.0" height="20" fill="#222"/>
<rect x="1180.5" y="189" width="11.0" height="20" fill="#222"/>
<rect x="1190.5" y="189" width="11.0" height="20" fill="#222"/>
<rect x="771.0" y="192" width="1" height="17" fill="#8a8a8a"/>
<rect x="791.0" y="192" width="1" height="17" fill="#8a8a8a"/>
<rect x="821.0" y="192" width="1" height="17" fill="#8a8a8a"/>
<rect x="841.0" y="192" width="1" height="17" fill="#8a8a8a"/>
<rect x="871.0" y="192" width="1" height="17" fill="#8a8a8a"/>
<rect x="901.0" y="192" width="1" height="17" fill="#8a8a8a"/>
<rect x="931.0" y="192" width="1" height="17" fill="#8a8a8a"/>
<rect x="961.0" y="192" width="1" height="17" fill="#8a8a8a"/>
<rect x="991.0" y="192" width="1" height="17" fill="#8a8a8a"/>
<rect x="1041.0" y="192" width="1" height="17" fill="#8a8a8a"/>
<rect x="1081.0" y="192" width="1" height="17" fill="#8a8a8a"/>
<rect x="1111.0" y="192" width="1" height="17" fill="#8a8a8a"/>
<rect x="1141.0" y="192" width="1" height="17" fill="#8a8a8a"/>
<rect x="1171.0" y="192" width="1" height="17" fill="#8a8a8a"/>
<rect x="751.0" y="190" width="1" height="3" fill="#8a8a8a"/>
<rect x="761.0" y="190" width="1" height="3" fill="#8a8a8a"/>
<rect x="781.0" y="190" width="1" height="3" fill="#8a8a8a"/>
<rect x="801.0" y="190" width="1" height="3" fill="#8a8a8a"/>
<rect x="811.0" y="190" width="1" height="3" fill="#8a8a8a"/>
<rect x="831.0" y="190" width="1" height="3" fill="#8a8a8a"/>
<rect x="851.0" y="190" width="1" height="3" fill="#8a8a8a"/>
<rect x="861.0" y="190" width="1" height="3" fill="#8a8a8a"/>
<rect x="881.0" y="190" width="1" height="3" fill="#8a8a8a"/>
<rect x="891.0" y="190" width="1" height="3" fill="#8a8a8a"/>
<rect x="911.0" y="190" width="1" height="3" fill="#8a8a8a"/>
<rect x="921.0" y="190" width="1" height="3" fill="#8a8a8a"/>
<rect x="941.0" y="190" width="1" height="3" fill="#8a8a8a"/>
<rect x="951.0" y="190" width="1" height="3" fill="#8a8a8a"/>
<rect x="971.0" y="190" width="1" height="3" fill="#8a8a8a"/>
<rect x="981.0" y="190" width="1" height="3" fill="#8a8a8a"/>
<rect x="1001.0" y="190" width="1" height="3" fill="#8a8a8a"/>
<rect x="1011.0" y="190" width="1" height="3" fill="#8a8a8a"/>
<rect x="1021.0" y="190" width="1" height="3" fill="#8a8a8a"/>
<rect x="1031.0" y="190" width="1" height="3" fill="#8a8a8a"/>
<rect x="1051.0" y="190" width="1" height="3" fill="#8a8a8a"/>
<rect x="1061.0" y="190" width="1" height="3" fill="#8a8a8a"/>
<rect x="1071.0" y="190" width="1" height="3" fill="#8a8a8a"/>
<rect x="1091.0" y="190" width="1" height="3" fill="#8a8a8a"/>
<rect x="1101.0" y="190" width="1" height="3" fill="#8a8a8a"/>
<rect x="1121.0" y="190" width="1" height="3" fill="#8a8a8a"/>
<rect x="1131.0" y="190" width="1" height="3" fill="#8a8a8a"/>
<rect x="1151.0" y="190" width="1" height="3" fill="#8a8a8a"/>
<rect x="1161.0" y="190" width="1" height="3" fill="#8a8a8a"/>
<rect x="1181.0" y="190" width="1" height="3" fill="#8a8a8a"/>
<rect x="1191.0" y="190" width="1" height="3" fill="#8a8a8a"/>
<circle cx="746.0" cy="199.0" r="1.7" fill="#fff" shape-rendering="geometricPrecision"/>
<circle cx="756.0" cy="199.0" r="1.7" fill="#fff" shape-rendering="geometricPrecision"/>
<circle cx="776.0" cy="199.0" r="1.7" fill="#fff" shape-rendering="geometricPrecision"/>
<circle cx="796.0" cy="199.0" r="1.7" fill="#fff" shape-rendering="geometricPrecision"/>
<circle cx="806.0" cy="199.0" r="1.7" fill="#fff" shape-rendering="geometricPrecision"/>
<circle cx="826.0" cy="199.0" r="1.7" fill="#fff" shape-rendering="geometricPrecision"/>
<circle cx="846.0" cy="199.0" r="1.7" fill="#fff" shape-rendering="geometricPrecision"/>
<circle cx="876.0" cy="199.0" r="1.7" fill="#fff" shape-rendering="geometricPrecision"/>
<circle cx="906.0" cy="199.0" r="1.7" fill="#fff" shape-rendering="geometricPrecision"/>
<circle cx="936.0" cy="199.0" r="1.7" fill="#fff" shape-rendering="geometricPrecision"/>
<circle cx="966.0" cy="199.0" r="1.7" fill="#fff" shape-rendering="geometricPrecision"/>
<circle cx="996.0" cy="199.0" r="1.7" fill="#fff" shape-rendering="geometricPrecision"/>
<circle cx="1046.0" cy="199.0" r="1.7" fill="#fff" shape-rendering="geometricPrecision"/>
<circle cx="1086.0" cy="199.0" r="1.7" fill="#fff" shape-rendering="geometricPrecision"/>
<circle cx="1116.0" cy="199.0" r="1.7" fill="#fff" shape-rendering="geometricPrecision"/>
<circle cx="1146.0" cy="199.0" r="1.7" fill="#fff" shape-rendering="geometricPrecision"/>
<circle cx="1176.0" cy="199.0" r="1.7" fill="#fff" shape-rendering="geometricPrecision"/>
<rect x="1201.0" y="189" width="159.0" height="20" fill="url(#stripes)"/>
<rect x="1201.0" y="208" width="159.0" height="1" fill="#dcdcdc"/><rect x="1201.0" y="209" width="159.0" height="1" fill="#333"/>
<rect x="741" y="210" width="460.0" height="21" fill="#fff"/>
<rect x="740.5" y="210" width="11.0" height="21" fill="#222"/>
<rect x="760.5" y="210" width="11.0" height="21" fill="#222"/>
<rect x="781.0" y="210" width="1" height="21" fill="#d4d4d4"/>
<rect x="791.0" y="210" width="10.0" height="21" fill="#2d8a98"/>
<rect x="801.0" y="210" width="1" height="21" fill="#d4d4d4"/>
<rect x="811.0" y="210" width="1" height="21" fill="#d4d4d4"/>
<rect x="821.0" y="210" width="1" height="21" fill="#d4d4d4"/>
<rect x="831.0" y="210" width="1" height="21" fill="#d4d4d4"/>
<rect x="841.0" y="210" width="1" height="21" fill="#d4d4d4"/>
<rect x="851.0" y="210" width="1" height="21" fill="#d4d4d4"/>
<rect x="861.0" y="210" width="1" height="21" fill="#d4d4d4"/>
<rect x="871.0" y="210" width="1" height="21" fill="#d4d4d4"/>
<rect x="881.0" y="210" width="1" height="21" fill="#d4d4d4"/>
<rect x="891.0" y="210" width="1" height="21" fill="#d4d4d4"/>
<rect x="901.0" y="210" width="1" height="21" fill="#d4d4d4"/>
<rect x="911.0" y="210" width="1" height="21" fill="#d4d4d4"/>
<rect x="921.0" y="210" width="1" height="21" fill="#d4d4d4"/>
<rect x="931.0" y="210" width="1" height="21" fill="#d4d4d4"/>
<rect x="941.0" y="210" width="1" height="21" fill="#d4d4d4"/>
<rect x="951.0" y="210" width="1" height="21" fill="#d4d4d4"/>
<rect x="961.0" y="210" width="1" height="21" fill="#d4d4d4"/>
<rect x="971.0" y="210" width="1" height="21" fill="#d4d4d4"/>
<rect x="981.0" y="210" width="1" height="21" fill="#d4d4d4"/>
<rect x="991.0" y="210" width="1" height="21" fill="#d4d4d4"/>
<rect x="1001.0" y="210" width="1" height="21" fill="#d4d4d4"/>
<rect x="1011.0" y="210" width="1" height="21" fill="#d4d4d4"/>
<rect x="1021.0" y="210" width="1" height="21" fill="#d4d4d4"/>
<rect x="1031.0" y="210" width="1" height="21" fill="#d4d4d4"/>
<rect x="1041.0" y="210" width="1" height="21" fill="#d4d4d4"/>
<rect x="1051.0" y="210" width="1" height="21" fill="#d4d4d4"/>
<rect x="1061.0" y="210" width="1" height="21" fill="#d4d4d4"/>
<rect x="1071.0" y="210" width="1" height="21" fill="#d4d4d4"/>
<rect x="1080.5" y="210" width="11.0" height="21" fill="#222"/>
<rect x="1101.0" y="210" width="1" height="21" fill="#d4d4d4"/>
<rect x="1111.0" y="210" width="1" height="21" fill="#d4d4d4"/>
<rect x="1121.0" y="210" width="1" height="21" fill="#d4d4d4"/>
<rect x="1131.0" y="210" width="1" height="21" fill="#d4d4d4"/>
<rect x="1141.0" y="210" width="1" height="21" fill="#d4d4d4"/>
<rect x="1151.0" y="210" width="1" height="21" fill="#d4d4d4"/>
<rect x="1161.0" y="210" width="1" height="21" fill="#d4d4d4"/>
<rect x="1170.5" y="210" width="11.0" height="21" fill="#222"/>
<rect x="1191.0" y="210" width="1" height="21" fill="#d4d4d4"/>
<rect x="761.0" y="213" width="1" height="18" fill="#8a8a8a"/>
<rect x="1081.0" y="213" width="1" height="18" fill="#8a8a8a"/>
<rect x="1171.0" y="213" width="1" height="18" fill="#8a8a8a"/>
<circle cx="746.0" cy="220.5" r="1.7" fill="#fff" shape-rendering="geometricPrecision"/>
<circle cx="766.0" cy="220.5" r="1.7" fill="#fff" shape-rendering="geometricPrecision"/>
<circle cx="1086.0" cy="220.5" r="1.7" fill="#fff" shape-rendering="geometricPrecision"/>
<circle cx="1176.0" cy="220.5" r="1.7" fill="#fff" shape-rendering="geometricPrecision"/>
<circle cx="756.0" cy="220.5" r="2.1" fill="none" stroke="#a8a8a8" stroke-width="1.5" shape-rendering="geometricPrecision"/>
<circle cx="776.0" cy="220.5" r="2.1" fill="none" stroke="#a8a8a8" stroke-width="1.5" shape-rendering="geometricPrecision"/>
<circle cx="786.0" cy="220.5" r="2.1" fill="none" stroke="#a8a8a8" stroke-width="1.5" shape-rendering="geometricPrecision"/>
<circle cx="806.0" cy="220.5" r="2.1" fill="none" stroke="#a8a8a8" stroke-width="1.5" shape-rendering="geometricPrecision"/>
<circle cx="816.0" cy="220.5" r="2.1" fill="none" stroke="#a8a8a8" stroke-width="1.5" shape-rendering="geometricPrecision"/>
<circle cx="1096.0" cy="220.5" r="2.1" fill="none" stroke="#a8a8a8" stroke-width="1.5" shape-rendering="geometricPrecision"/>
<circle cx="1186.0" cy="220.5" r="2.1" fill="none" stroke="#a8a8a8" stroke-width="1.5" shape-rendering="geometricPrecision"/>
<rect x="1201.0" y="210" width="159.0" height="21" fill="url(#stripes)"/>
<rect x="1201.0" y="230" width="159.0" height="1" fill="#dcdcdc"/><rect x="1201.0" y="231" width="159.0" height="1" fill="#333"/>
<rect x="741" y="232" width="460.0" height="21" fill="#fff"/>
<rect x="751.0" y="232" width="1" height="21" fill="#d4d4d4"/>
<rect x="761.0" y="232" width="1" height="21" fill="#d4d4d4"/>
<rect x="771.0" y="232" width="1" height="21" fill="#d4d4d4"/>
<rect x="781.0" y="232" width="1" height="21" fill="#d4d4d4"/>
<rect x="790.5" y="232" width="11.0" height="21" fill="#222"/>
<rect x="800.5" y="232" width="11.0" height="21" fill="#222"/>
<rect x="810.5" y="232" width="11.0" height="21" fill="#222"/>
<rect x="831.0" y="232" width="1" height="21" fill="#d4d4d4"/>
<rect x="841.0" y="232" width="1" height="21" fill="#d4d4d4"/>
<rect x="851.0" y="232" width="1" height="21" fill="#d4d4d4"/>
<rect x="861.0" y="232" width="1" height="21" fill="#d4d4d4"/>
<rect x="871.0" y="232" width="1" height="21" fill="#d4d4d4"/>
<rect x="881.0" y="232" width="1" height="21" fill="#d4d4d4"/>
<rect x="891.0" y="232" width="1" height="21" fill="#d4d4d4"/>
<rect x="901.0" y="232" width="1" height="21" fill="#d4d4d4"/>
<rect x="911.0" y="232" width="1" height="21" fill="#d4d4d4"/>
<rect x="921.0" y="232" width="1" height="21" fill="#d4d4d4"/>
<rect x="931.0" y="232" width="1" height="21" fill="#d4d4d4"/>
<rect x="941.0" y="232" width="1" height="21" fill="#d4d4d4"/>
<rect x="951.0" y="232" width="1" height="21" fill="#d4d4d4"/>
<rect x="961.0" y="232" width="1" height="21" fill="#d4d4d4"/>
<rect x="971.0" y="232" width="1" height="21" fill="#d4d4d4"/>
<rect x="981.0" y="232" width="1" height="21" fill="#d4d4d4"/>
<rect x="991.0" y="232" width="1" height="21" fill="#d4d4d4"/>
<rect x="1001.0" y="232" width="1" height="21" fill="#d4d4d4"/>
<rect x="1011.0" y="232" width="1" height="21" fill="#d4d4d4"/>
<rect x="1021.0" y="232" width="1" height="21" fill="#d4d4d4"/>
<rect x="1031.0" y="232" width="1" height="21" fill="#d4d4d4"/>
<rect x="1041.0" y="232" width="1" height="21" fill="#d4d4d4"/>
<rect x="1051.0" y="232" width="1" height="21" fill="#d4d4d4"/>
<rect x="1061.0" y="232" width="1" height="21" fill="#d4d4d4"/>
<rect x="1071.0" y="232" width="1" height="21" fill="#d4d4d4"/>
<rect x="1081.0" y="232" width="1" height="21" fill="#d4d4d4"/>
<rect x="1091.0" y="232" width="1" height="21" fill="#d4d4d4"/>
<rect x="1101.0" y="232" width="1" height="21" fill="#d4d4d4"/>
<rect x="1111.0" y="232" width="1" height="21" fill="#d4d4d4"/>
<rect x="1121.0" y="232" width="1" height="21" fill="#d4d4d4"/>
<rect x="1131.0" y="232" width="1" height="21" fill="#d4d4d4"/>
<rect x="1141.0" y="232" width="1" height="21" fill="#d4d4d4"/>
<rect x="1151.0" y="232" width="1" height="21" fill="#d4d4d4"/>
<rect x="1161.0" y="232" width="1" height="21" fill="#d4d4d4"/>
<rect x="1171.0" y="232" width="1" height="21" fill="#d4d4d4"/>
<rect x="1181.0" y="232" width="1" height="21" fill="#d4d4d4"/>
<rect x="1191.0" y="232" width="1" height="21" fill="#d4d4d4"/>
<rect x="791.0" y="235" width="1" height="18" fill="#8a8a8a"/>
<rect x="801.0" y="233" width="1" height="3" fill="#8a8a8a"/>
<rect x="811.0" y="233" width="1" height="3" fill="#8a8a8a"/>
<circle cx="796.0" cy="242.5" r="1.7" fill="#fff" shape-rendering="geometricPrecision"/>
<circle cx="806.0" cy="242.5" r="1.7" fill="#fff" shape-rendering="geometricPrecision"/>
<circle cx="746.0" cy="242.5" r="2.1" fill="none" stroke="#a8a8a8" stroke-width="1.5" shape-rendering="geometricPrecision"/>
<circle cx="826.0" cy="242.5" r="2.1" fill="none" stroke="#a8a8a8" stroke-width="1.5" shape-rendering="geometricPrecision"/>
<rect x="1201.0" y="232" width="159.0" height="21" fill="url(#stripes)"/>
<rect x="1201.0" y="252" width="159.0" height="1" fill="#dcdcdc"/><rect x="1201.0" y="253" width="159.0" height="1" fill="#333"/>
<rect x="741" y="254" width="460.0" height="20" fill="#fff"/>
<rect x="751.0" y="254" width="1" height="20" fill="#d4d4d4"/>
<rect x="761.0" y="254" width="1" height="20" fill="#d4d4d4"/>
<rect x="771.0" y="254" width="1" height="20" fill="#d4d4d4"/>
<rect x="781.0" y="254" width="1" height="20" fill="#d4d4d4"/>
<rect x="790.5" y="254" width="11.0" height="20" fill="#222"/>
<rect x="800.5" y="254" width="11.0" height="20" fill="#222"/>
<rect x="810.5" y="254" width="11.0" height="20" fill="#222"/>
<rect x="820.5" y="254" width="11.0" height="20" fill="#222"/>
<rect x="830.5" y="254" width="11.0" height="20" fill="#222"/>
<rect x="851.0" y="254" width="1" height="20" fill="#d4d4d4"/>
<rect x="861.0" y="254" width="1" height="20" fill="#d4d4d4"/>
<rect x="871.0" y="254" width="1" height="20" fill="#d4d4d4"/>
<rect x="881.0" y="254" width="1" height="20" fill="#d4d4d4"/>
<rect x="891.0" y="254" width="1" height="20" fill="#d4d4d4"/>
<rect x="901.0" y="254" width="1" height="20" fill="#d4d4d4"/>
<rect x="911.0" y="254" width="1" height="20" fill="#d4d4d4"/>
<rect x="921.0" y="254" width="1" height="20" fill="#d4d4d4"/>
<rect x="931.0" y="254" width="1" height="20" fill="#d4d4d4"/>
<rect x="941.0" y="254" width="1" height="20" fill="#d4d4d4"/>
<rect x="951.0" y="254" width="1" height="20" fill="#d4d4d4"/>
<rect x="961.0" y="254" width="1" height="20" fill="#d4d4d4"/>
<rect x="971.0" y="254" width="1" height="20" fill="#d4d4d4"/>
<rect x="981.0" y="254" width="1" height="20" fill="#d4d4d4"/>
<rect x="991.0" y="254" width="1" height="20" fill="#d4d4d4"/>
<rect x="1001.0" y="254" width="1" height="20" fill="#d4d4d4"/>
<rect x="1011.0" y="254" width="1" height="20" fill="#d4d4d4"/>
<rect x="1021.0" y="254" width="1" height="20" fill="#d4d4d4"/>
<rect x="1031.0" y="254" width="1" height="20" fill="#d4d4d4"/>
<rect x="1041.0" y="254" width="1" height="20" fill="#d4d4d4"/>
<rect x="1051.0" y="254" width="1" height="20" fill="#d4d4d4"/>
<rect x="1061.0" y="254" width="1" height="20" fill="#d4d4d4"/>
<rect x="1071.0" y="254" width="1" height="20" fill="#d4d4d4"/>
<rect x="1081.0" y="254" width="1" height="20" fill="#d4d4d4"/>
<rect x="1091.0" y="254" width="1" height="20" fill="#d4d4d4"/>
<rect x="1101.0" y="254" width="1" height="20" fill="#d4d4d4"/>
<rect x="1111.0" y="254" width="1" height="20" fill="#d4d4d4"/>
<rect x="1121.0" y="254" width="1" height="20" fill="#d4d4d4"/>
<rect x="1131.0" y="254" width="1" height="20" fill="#d4d4d4"/>
<rect x="1141.0" y="254" width="1" height="20" fill="#d4d4d4"/>
<rect x="1151.0" y="254" width="1" height="20" fill="#d4d4d4"/>
<rect x="1161.0" y="254" width="1" height="20" fill="#d4d4d4"/>
<rect x="1171.0" y="254" width="1" height="20" fill="#d4d4d4"/>
<rect x="1181.0" y="254" width="1" height="20" fill="#d4d4d4"/>
<rect x="1191.0" y="254" width="1" height="20" fill="#d4d4d4"/>
<rect x="791.0" y="257" width="1" height="17" fill="#8a8a8a"/>
<rect x="821.0" y="257" width="1" height="17" fill="#8a8a8a"/>
<rect x="801.0" y="255" width="1" height="3" fill="#8a8a8a"/>
<rect x="811.0" y="255" width="1" height="3" fill="#8a8a8a"/>
<rect x="831.0" y="255" width="1" height="3" fill="#8a8a8a"/>
<circle cx="796.0" cy="264.0" r="1.7" fill="#fff" shape-rendering="geometricPrecision"/>
<circle cx="806.0" cy="264.0" r="1.7" fill="#fff" shape-rendering="geometricPrecision"/>
<circle cx="826.0" cy="264.0" r="1.7" fill="#fff" shape-rendering="geometricPrecision"/>
<circle cx="746.0" cy="264.0" r="2.1" fill="none" stroke="#a8a8a8" stroke-width="1.5" shape-rendering="geometricPrecision"/>
<circle cx="846.0" cy="264.0" r="2.1" fill="none" stroke="#a8a8a8" stroke-width="1.5" shape-rendering="geometricPrecision"/>
<rect x="1201.0" y="254" width="159.0" height="20" fill="url(#stripes)"/>
<rect x="741.5" y="188" width="620" height="1" fill="#444"/>
<rect x="796" y="188" width="2" height="86" fill="#b81c1c"/>
<circle cx="797" cy="199" r="1.6" fill="#f08a8a" shape-rendering="geometricPrecision"/>
<circle cx="797" cy="220.5" r="1.6" fill="#f08a8a" shape-rendering="geometricPrecision"/>
<circle cx="797" cy="242.5" r="1.6" fill="#f08a8a" shape-rendering="geometricPrecision"/>
<circle cx="797" cy="264" r="1.6" fill="#f08a8a" shape-rendering="geometricPrecision"/>
<rect x="792" y="208" width="11" height="2" fill="#eee"/><rect x="792" y="252" width="11" height="2" fill="#eee"/>
<rect x="1360.5" y="227" width="4" height="47" fill="#8a8a8a"/>
</svg></body></html>
